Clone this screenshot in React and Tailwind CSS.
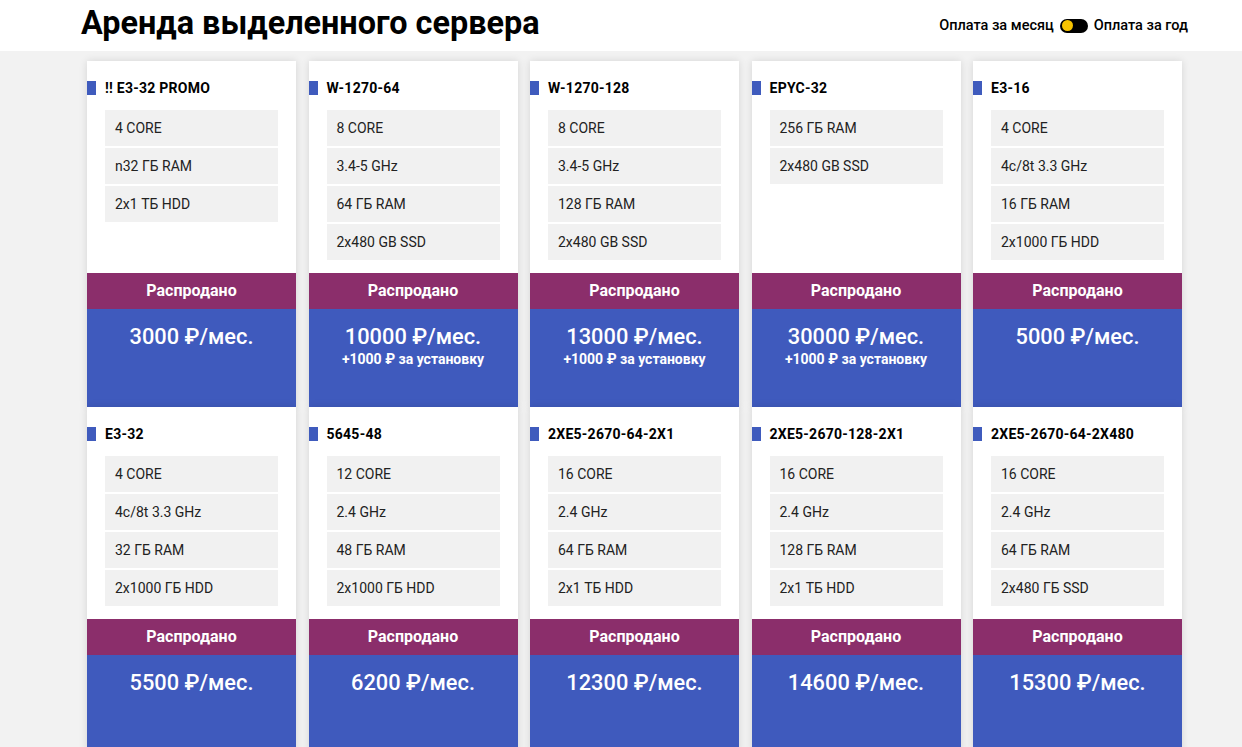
import React from "react";

const servers = [
  { name: "!! E3-32 PROMO", specs: ["4 CORE", "n32 ГБ RAM", "2x1 ТБ HDD"], price: "3000" },
  { name: "W-1270-64", specs: ["8 CORE", "3.4-5 GHz", "64 ГБ RAM", "2x480 GB SSD"], price: "10000", setup: true },
  { name: "W-1270-128", specs: ["8 CORE", "3.4-5 GHz", "128 ГБ RAM", "2x480 GB SSD"], price: "13000", setup: true },
  { name: "EPYC-32", specs: ["256 ГБ RAM", "2x480 GB SSD"], price: "30000", setup: true },
  { name: "E3-16", specs: ["4 CORE", "4c/8t 3.3 GHz", "16 ГБ RAM", "2x1000 ГБ HDD"], price: "5000" },
  { name: "E3-32", specs: ["4 CORE", "4c/8t 3.3 GHz", "32 ГБ RAM", "2x1000 ГБ HDD"], price: "5500" },
  { name: "5645-48", specs: ["12 CORE", "2.4 GHz", "48 ГБ RAM", "2x1000 ГБ HDD"], price: "6200" },
  { name: "2XE5-2670-64-2X1", specs: ["16 CORE", "2.4 GHz", "64 ГБ RAM", "2x1 ТБ HDD"], price: "12300" },
  { name: "2XE5-2670-128-2X1", specs: ["16 CORE", "2.4 GHz", "128 ГБ RAM", "2x1 ТБ HDD"], price: "14600" },
  { name: "2XE5-2670-64-2X480", specs: ["16 CORE", "2.4 GHz", "64 ГБ RAM", "2x480 ГБ SSD"], price: "15300" },
];

function Card({ s }) {
  return (
    <div className="bg-white h-[346px] flex flex-col shadow-[0_0_8px_rgba(0,0,0,0.12)]">
      <div className="flex items-center h-[14px] mt-[20px]">
        <div className="w-[9px] h-[14px] bg-[#3f5bbd]" />
        <div className="ml-[9px] text-[14px] leading-[14px] font-bold text-black uppercase tracking-[0.25px]">{s.name}</div>
      </div>
      <div className="h-[178px] pt-[15px] px-[18px] flex flex-col gap-[2px]">
        {s.specs.map((sp) => (
          <div key={sp} className="bg-[#f1f1f1] h-[36px] shrink-0 flex items-center pl-[10px] text-[14px] text-[#222]">
            {sp}
          </div>
        ))}
      </div>
      <div className="h-[36px] bg-[#8b2e6b] text-white font-bold text-[16px] flex items-center justify-center">
        Распродано
      </div>
      <div className="flex-1 bg-[#3f5abd] text-white flex flex-col items-center pt-[14px]">
        <div className="text-[21.8px] font-medium leading-[28px]">{s.price} ₽/мес.</div>
        {s.setup && <div className="text-[14px] font-bold leading-[16px]">+1000 ₽ за установку</div>}
      </div>
    </div>
  );
}

export default function App() {
  return (
    <div className="min-h-[747px] bg-[#f2f2f2] font-['Roboto',sans-serif] overflow-hidden">
      <div className="bg-white h-[51px] flex items-center justify-between pl-[81px] pr-[54px]">
        <h1 className="text-[32.4px] font-bold text-black leading-none -mt-[4px]">Аренда выделенного сервера</h1>
        <div className="flex items-center gap-[6px] text-[14.5px] font-medium text-black">
          <span>Оплата за месяц</span>
          <div className="w-[28px] h-[14px] rounded-full bg-black flex items-center pl-[2px]">
            <div className="w-[11px] h-[11px] rounded-full bg-[#f7c300]" />
          </div>
          <span>Оплата за год</span>
        </div>
      </div>
      <div className="ml-[87px] w-[1095px] mt-[10px] grid grid-cols-5 gap-x-[12.5px]">
        {servers.map((s) => (
          <Card key={s.name} s={s} />
        ))}
      </div>
    </div>
  );
}
